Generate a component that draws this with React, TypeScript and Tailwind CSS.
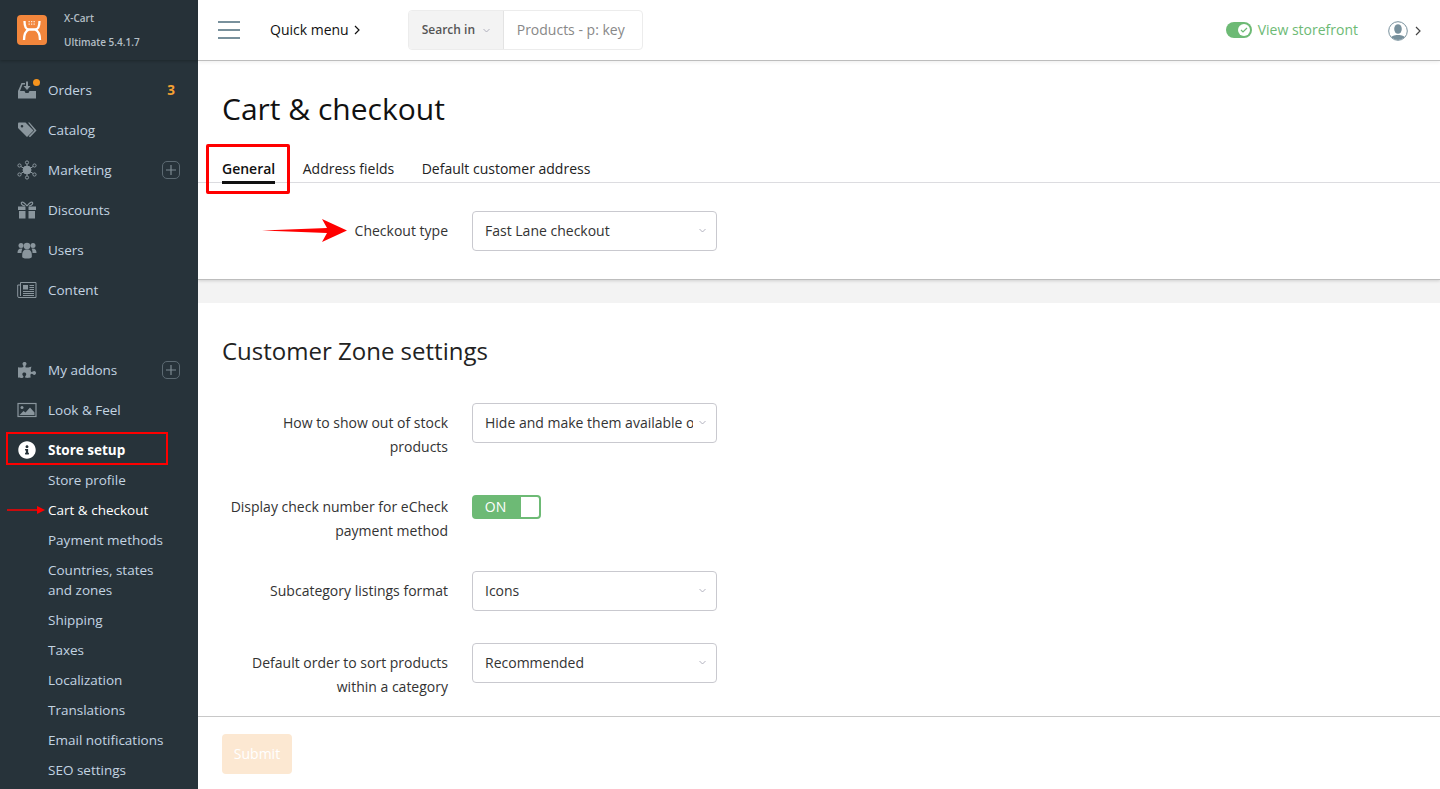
import React from "react";
import { FaPuzzlePiece, FaInfoCircle } from "react-icons/fa";

const G = "#8a969d";
const Ico = ({ children }: { children: React.ReactNode }) => (
  <svg width="20" height="20" viewBox="0 0 20 20" fill={G}>{children}</svg>
);
const OrdersIcon = () => (
  <Ico>
    <path d="M1 11l3.500-8H8v1.500H5.500L3 11h4.500l1 2h3l1-2H19v7.500H1z" />
    <path d="M9 1.500h2v4.500h2.500L10 10 6.500 6H9z" />
  </Ico>
);
const TagsIcon = () => (
  <Ico>
    <path d="M1 3.500L1.500 2.500h7l8 8-6.500 6.500-9-9zM5 5a1.300 1.300 0 1 0 0 2.600A1.300 1.300 0 0 0 5 5z" />
    <path d="M11 2.500h1.500l7 8-6.500 6.800-1.300-1 5.700-5.800z" />
  </Ico>
);
const MarketingIcon = () => (
  <svg width="20" height="20" viewBox="0 0 20 20" fill="none" stroke={G} strokeWidth="1">
    <circle cx="10" cy="10" r="4" fill={G} />
    <circle cx="10" cy="2.500" r="1.600" />
    <circle cx="10" cy="17.500" r="1.600" />
    <circle cx="2.500" cy="5.500" r="1.600" />
    <circle cx="17.500" cy="5.500" r="1.600" />
    <circle cx="2.500" cy="14.500" r="1.600" />
    <circle cx="17.500" cy="14.500" r="1.600" />
    <path d="M10 4v3M10 13v3M4 6.500l3 2M16 6.500l-3 2M4 13.500l3-2M16 13.500l-3-2" />
  </svg>
);
const GiftIcon = () => (
  <svg width="20" height="20" viewBox="0 0 20 20" fill={G}>
    <path d="M1 6.500h7.500V10H1zM11.500 6.500H19V10h-7.500zM2 11h6.500v7.500H2zM11.500 11H18v7.500h-6.500z" />
    <path d="M10 6C8 3.500 6 1.500 4.800 2.300 3.500 3.200 5 5.500 8 6M10 6c2-2.500 4-4.500 5.200-3.700C16.500 3.200 15 5.500 12 6" fill="none" stroke={G} strokeWidth="1.200" />
  </svg>
);
const UsersIcon = () => (
  <Ico>
    <circle cx="4" cy="5.500" r="2.500" />
    <circle cx="16" cy="5.500" r="2.500" />
    <circle cx="10" cy="6" r="3.300" />
    <path d="M0.500 13c0-3 1.200-4.500 3.500-4.500 .6 0 1 .1 1.400 .3C4.700 10 4.500 11.500 4.500 13zM19.500 13c0-3-1.200-4.500-3.500-4.500-.6 0-1 .1-1.400 .3 .7 1.200 .9 2.700 .9 4.200z" />
    <path d="M5.200 15c0-3.500 1.500-5.500 4.800-5.500s4.800 2 4.800 5.500v2c0 .8-1.500 1.500-4.800 1.500s-4.800-.7-4.800-1.500z" />
  </Ico>
);
const ContentIcon = () => (
  <svg width="20" height="20" viewBox="0 0 20 20" fill="none" stroke={G} strokeWidth="1">
    <path d="M3.500 2.500h15.500v15H2a1.300 1.300 0 0 1-1.300-1.300V5h2.800zM3.500 5v11" />
    <path d="M6 5h5v4.500H6z" fill={G} stroke="none" />
    <path d="M12.500 5.500H17M12.500 7.500H17M12.500 9.500H17M6 11.500h11M6 13.500h11M6 15.500h11" strokeWidth="1.100" />
  </svg>
);
const LookIcon = () => (
  <svg width="20" height="20" viewBox="0 0 20 20" fill="none">
    <rect x="1" y="3.500" width="18" height="13" stroke={G} strokeWidth="1.200" />
    <circle cx="5" cy="7.500" r="1.500" fill={G} />
    <path d="M2.500 15l4-4 2 1.500 4.500-5 4.500 5V15z" fill={G} />
  </svg>
);
const PlusBox = () => (
  <span className="flex h-[18px] w-[18px] items-center justify-center rounded-[5px] border border-[#5c6a72]">
    <svg width="10" height="10" viewBox="0 0 10 10" stroke="#7d8a91" strokeWidth="1.200">
      <path d="M5 0v10M0 5h10" />
    </svg>
  </span>
);
const Chevron = ({ className = "" }: { className?: string }) => (
  <svg width="7" height="5" viewBox="0 0 7 5" fill="none" stroke="#a9a9b8" strokeWidth="0.900" className={className}>
    <path d="M0.500 1l3 3 3-3" />
  </svg>
);
const Caret = ({ color = "#333" }: { color?: string }) => (
  <svg width="6" height="10" viewBox="0 0 6 10" fill="none" stroke={color} strokeWidth="1.200">
    <path d="M1 1l4 4-4 4" />
  </svg>
);

const MainItem = ({ icon, label, right, bold }: { icon: React.ReactNode; label: string; right?: React.ReactNode; bold?: boolean }) => (
  <div className="flex h-10 items-center pl-[17px] pr-[18px]">
    <span className="flex w-[20px] items-center justify-center">{icon}</span>
    <span className={bold ? "ml-[11px] font-bold leading-5 text-white" : "ml-[11px] leading-5 text-[#c3d4e2]"}>{label}</span>
    <span className="ml-auto flex items-center">{right}</span>
  </div>
);

const SubItem = ({ label, active }: { label: React.ReactNode; active?: boolean }) => (
  <div className={`py-[5px] pl-[48px] leading-5 ${active ? "text-white" : "text-[#c3d4e2]"}`}>{label}</div>
);

const Select = ({ value }: { value: string }) => (
  <div className="flex h-10 w-[245px] items-center rounded border border-[#c9c9cf] bg-white pb-[2px] pl-3 pr-[10px]">
    <span className="w-[208px] overflow-hidden whitespace-nowrap text-[#333]">{value}</span>
    <Chevron className="ml-auto shrink-0" />
  </div>
);

const Row = ({ label, children, className = "" }: { label: React.ReactNode; children: React.ReactNode; className?: string }) => (
  <div className={`flex items-start gap-6 ${className}`}>
    <div className="w-[250px] pt-2 text-right leading-6 text-[#333]">{label}</div>
    {children}
  </div>
);

export default function App() {
  return (
    <div className="relative flex h-[789px] w-[1440px] overflow-hidden bg-white text-[14px] [font-family:'Open_Sans',sans-serif]">
      <aside className="h-full w-[198px] shrink-0 overflow-hidden bg-[#27333a] text-[13.5px]">
        <div className="flex h-[60px] items-center bg-[#263138] pl-[17px] shadow-[0_1px_3px_rgba(0,0,0,0.25)]">
          <div className="flex h-[30px] w-[30px] items-center justify-center rounded-[4px] bg-[#f2863c]">
            <svg width="30" height="30" viewBox="0 0 30 30" fill="none">
              <path d="M7.500 6C7.500 11 9 14.500 12 14.500H18C21 14.500 22.500 11 22.500 6M7 25C7 19 9.500 15.500 12 14.500M23 25C23 19 20.500 15.500 18 14.500" stroke="#fff" strokeWidth="2.300" />
              <path d="M11.500 6h1.300v1.300h-1.300zM14 6h1.300v1.300H14zM16.500 6h1.300v1.300h-1.300zM11.500 8.500h1.300v1.300h-1.300zM14 8.500h1.300v1.300H14zM16.500 8.500h1.300v1.300h-1.300z" fill="#fff" opacity="0.800" />
            </svg>
          </div>
          <div className="ml-[17px] text-[10px] font-semibold leading-6 text-[#b4bfc6]">
            <div>X-Cart</div>
            <div>Ultimate 5.4.1.7</div>
          </div>
        </div>
        <nav className="pt-[10px]">
          <MainItem
            icon={
              <span className="relative">
                <OrdersIcon />
                <span className="absolute -right-[3px] -top-[1px] h-[7px] w-[7px] rounded-full bg-[#f7941d]" />
              </span>
            }
            label="Orders"
            right={<span className="mr-[5px] font-bold text-[#f5a133]">3</span>}
          />
          <MainItem icon={<TagsIcon />} label="Catalog" />
          <MainItem icon={<MarketingIcon />} label="Marketing" right={<PlusBox />} />
          <MainItem icon={<GiftIcon />} label="Discounts" />
          <MainItem icon={<UsersIcon />} label="Users" />
          <MainItem icon={<ContentIcon />} label="Content" />
          <div className="h-10" />
          <MainItem icon={<FaPuzzlePiece size={18} color={G} />} label="My addons" right={<PlusBox />} />
          <MainItem icon={<LookIcon />} label="Look & Feel" />
          <MainItem icon={<FaInfoCircle size={18} color="#fff" />} label="Store setup" bold />
          <div className="-mt-[5px]">
            <SubItem label="Store profile" />
            <SubItem label="Cart & checkout" active />
            <SubItem label="Payment methods" />
            <SubItem label={<>Countries, states<br />and zones</>} />
            <SubItem label="Shipping" />
            <SubItem label="Taxes" />
            <SubItem label="Localization" />
            <SubItem label="Translations" />
            <SubItem label="Email notifications" />
            <SubItem label="SEO settings" />
          </div>
        </nav>
      </aside>

      <div className="flex h-full min-w-0 flex-1 flex-col">
        <header className="z-10 flex h-[61px] shrink-0 items-center border-b border-[#bdbdbd] bg-white pl-[20px] pr-[19px] shadow-[0_1px_4px_rgba(0,0,0,0.08)]">
          <div className="flex h-[18px] w-[22px] flex-col justify-between">
            <span className="h-[2px] bg-[#78909c]" />
            <span className="h-[2px] bg-[#78909c]" />
            <span className="h-[2px] bg-[#78909c]" />
          </div>
          <div className="ml-[30px] flex items-center pb-[2px] text-[#111]">
            Quick menu
            <span className="ml-[5px] pt-[2px]"><Caret color="#111" /></span>
          </div>
          <div className="ml-[48px] flex h-10 w-[235px] items-center overflow-hidden rounded border border-[#ececec]">
            <div className="flex h-full w-[95px] items-center justify-between border-r border-[#e3e3e3] bg-[#f3f3f3] pl-[13px] pr-[13px] text-[12px] font-semibold text-[#555]">
              Search in <Chevron />
            </div>
            <div className="pb-[2px] pl-[13px] text-[#888]">Products - p: key</div>
          </div>
          <div className="ml-auto flex items-center">
            <span className="relative h-[16px] w-[26px] rounded-full bg-[#6dba75]">
              <span className="absolute right-[2px] top-[2px] flex h-[12px] w-[12px] items-center justify-center rounded-full bg-white">
                <svg width="8" height="8" viewBox="0 0 8 8" fill="none" stroke="#6dba75" strokeWidth="1.200">
                  <path d="M1 4l2 2 4-4" />
                </svg>
              </span>
            </span>
            <span className="ml-[6px] pb-[2px] text-[#6dba75]">View storefront</span>
            <svg width="20" height="20" viewBox="0 0 20 20" className="ml-[30px] mt-[1px]">
              <defs>
                <clipPath id="avatar"><circle cx="10" cy="10" r="9" /></clipPath>
              </defs>
              <g clipPath="url(#avatar)" fill="#78909c">
                <ellipse cx="10" cy="8" rx="3.800" ry="4.800" />
                <path d="M2 20c0-5 4-6 8-6s8 1 8 6z" />
              </g>
              <circle cx="10" cy="10" r="9.300" fill="none" stroke="#78909c" strokeWidth="1" />
            </svg>
            <span className="ml-[7px] mt-[2px]"><Caret color="#444" /></span>
          </div>
        </header>

        <main className="min-h-0 flex-1 overflow-hidden">
          <section className="relative h-[219px] border-b border-[#bdbdbd] bg-white shadow-[0_1px_3px_rgba(0,0,0,0.15)]">
            <h1 className="pl-6 pt-[25px] text-[30px] font-normal leading-[46px] text-[#111]">Cart &amp; checkout</h1>
            <div className="mt-[25px] flex h-[26px] gap-[27.500px] border-b border-[#dcdce0] pl-6 leading-6 text-[#222]">
              <div className="h-[27px] border-b-[3px] border-[#111] font-semibold text-[#111]">General</div>
              <div>Address fields</div>
              <div>Default customer address</div>
            </div>
            <Row label="Checkout type" className="mt-[28px]">
              <Select value="Fast Lane checkout" />
            </Row>
          </section>
          <div className="h-[23px] bg-[#f3f3f3]" />
          <section className="bg-white pt-[30px]">
            <h2 className="pl-6 text-[24px] font-normal leading-9 text-[#222]">Customer Zone settings</h2>
            <Row label={<>How to show out of stock<br />products</>} className="mt-[34px]">
              <Select value="Hide and make them available only" />
            </Row>
            <Row label={<>Display check number for eCheck<br />payment method</>} className="mt-[28px]">
              <div className="mt-2 flex h-6 w-[69px] items-center rounded border-2 border-[#6dba75] bg-white">
                <span className="flex h-full w-[47px] items-center justify-center bg-[#6dba75] pb-[2px] pr-[4px] text-white">ON</span>
              </div>
            </Row>
            <Row label="Subcategory listings format" className="mt-[28px]">
              <Select value="Icons" />
            </Row>
            <Row label={<>Default order to sort products<br />within a category</>} className="mt-[32px]">
              <Select value="Recommended" />
            </Row>
          </section>
        </main>

        <footer className="z-10 flex h-[73px] shrink-0 items-start border-t border-[#c8c8c8] bg-white pl-6 pt-[17px]">
          <div className="flex h-10 w-[70px] items-center justify-center rounded bg-[#fce8d2] pb-[2px] text-white">Submit</div>
        </footer>
      </div>

      <div className="absolute left-[206px] top-[144px] h-[50px] w-[84px] rounded-[2px] border-[3px] border-[#f00]" />
      <div className="absolute left-[6px] top-[432px] h-[33px] w-[162px] border-2 border-[#f00]" />
      <svg className="absolute left-[262px] top-[218px]" width="85" height="26" viewBox="0 0 85 26">
        <path d="M0 12.500L65 10 60 1 85 12.500 60 24 65 15z" fill="#f00" />
      </svg>
      <svg className="absolute left-[7px] top-[505px]" width="38" height="10" viewBox="0 0 38 10">
        <path d="M0 4.300H30V1L38 5 30 9V5.700H0z" fill="#f00" />
      </svg>
    </div>
  );
}
